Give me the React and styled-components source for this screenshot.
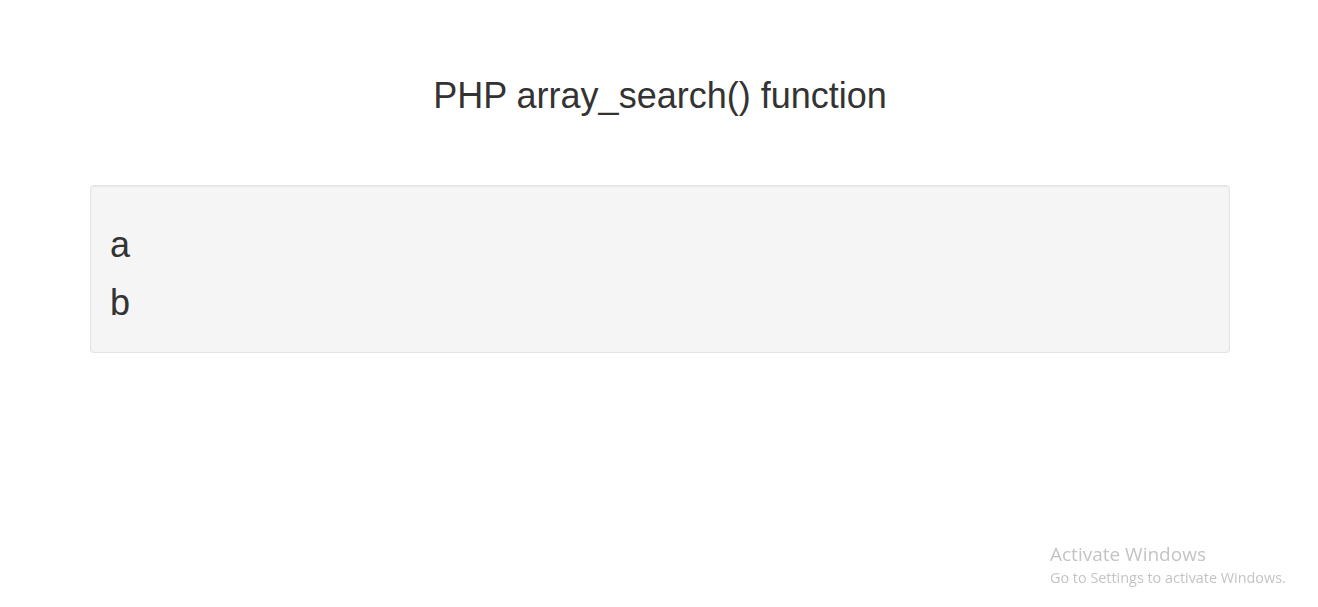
import React from "react";
import styled, { createGlobalStyle } from "styled-components";

const Global = createGlobalStyle`
  html, body { margin: 0; padding: 0; background: #fff; }
  body { font-family: "Liberation Sans", Arial, sans-serif; color: #333; }
`;

const Page = styled.div`
  width: 1140px;
  margin: 0 auto;
  padding-top: 76px;
  position: relative;
  left: 1px;
`;

const Title = styled.h1`
  margin: 0 0 69px;
  font-size: 36px;
  line-height: 40px;
  font-weight: 400;
  text-align: center;
  color: #333;
`;

const Well = styled.div`
  background: #f5f5f5;
  border: 1px solid #e3e3e3;
  border-radius: 4px;
  box-shadow: inset 0 1px 1px rgba(0, 0, 0, 0.05);
  padding: 39px 19px 29px;
  display: flex;
  flex-direction: column;
  gap: 18px;
`;

const Item = styled.div`
  font-size: 36px;
  line-height: 40px;
  color: #333;
`;

const Watermark = styled.div`
  position: fixed;
  left: 1050px;
  top: 542px;
  font-family: "Open Sans", "Noto Sans", sans-serif;
  color: #c4c4c4;
`;

const WmTitle = styled.div`
  font-size: 19px;
  line-height: 25px;
`;

const WmSub = styled.div`
  font-size: 14.4px;
  line-height: 20px;
  margin-top: 1px;
`;

export default function App() {
  return (
    <>
      <Global />
      <Page>
        <Title>PHP array_search() function</Title>
        <Well>
          <Item>a</Item>
          <Item>b</Item>
        </Well>
      </Page>
      <Watermark>
        <WmTitle>Activate Windows</WmTitle>
        <WmSub>Go to Settings to activate Windows.</WmSub>
      </Watermark>
    </>
  );
}
